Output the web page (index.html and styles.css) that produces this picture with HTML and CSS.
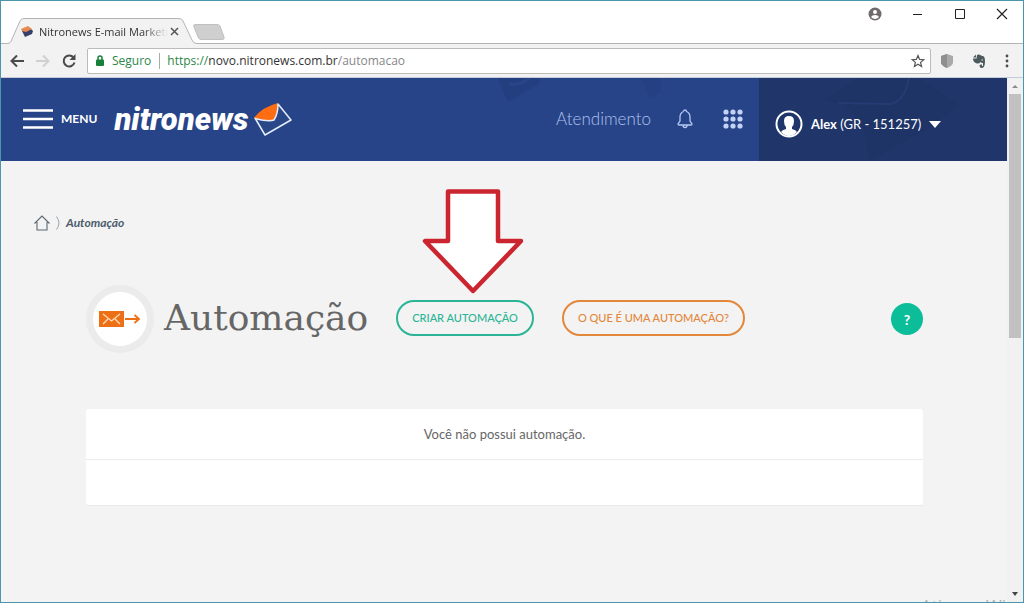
FILE: index.html
```html
<!DOCTYPE html>
<html lang="pt-BR">
  <head>
    <meta charset="UTF-8" />
    <meta name="viewport" content="width=device-width, initial-scale=1.0" />
    <title>Nitronews E-mail Marketing</title>
    <link rel="stylesheet" href="styles.css">
  </head>

  <body>
    <div class="window">
      <div class="titlebar">
        <div class="tab">
          <svg class="tab-shape" width="196" height="26" viewBox="0 0 196 26">
            <path d="M0 25.5H2C5 25.500 6 24 7 21L15 3Q16 .5 19 .5H174Q177 .5 178 3L187 22Q188 25.500 192 25.500V26H0Z" fill="#f2f2f2" />
            <path d="M0 25.500H2C5 25.500 6 24 7 21L15 3Q16 .5 19 .5H174Q177 .5 178 3L187 22Q188 25.500 192 25.500" fill="none" stroke="#b4b4b4" />
          </svg>
          <svg class="favicon" width="12" height="12" viewBox="0 0 12 12">
            <path d="M1 6L9 3L12 6L11 9L4 12Z" fill="#37416b" />
            <path d="M0 4L7 1L11 4L5 7L1 6Z" fill="#e78a4e" />
          </svg>
          <span class="tab-title">Nitronews E-mail Marketi</span>
          <button class="tab-close" aria-label="Fechar guia">
            <svg width="9" height="9" viewBox="0 0 9 9"><path d="M1 1L8 8M8 1L1 8" stroke="#555" stroke-width="1.500" /></svg>
          </button>
        </div>
        <button class="new-tab" aria-label="Nova guia">
          <svg width="32" height="16" viewBox="0 0 32 16"><path d="M2 .5H24Q26 .5 27 2L31 13Q32 15.500 29 15.500H8Q6 15.500 5 13L1 3Q0 .5 2 .5Z" fill="#cfcfcf" stroke="#c0c0c0" /></svg>
        </button>
        <div class="window-buttons">
          <button aria-label="Perfil">
            <svg width="14" height="14" viewBox="0 0 14 14"><circle cx="7" cy="7" r="6.500" fill="#706a6c" /><circle cx="7" cy="5" r="2" fill="#fff" /><path d="M3 10Q4 8 7 8T11 10Q9 12 7 12T3 10" fill="#fff" /></svg>
          </button>
          <button aria-label="Minimizar">
            <svg width="12" height="12" viewBox="0 0 12 12"><path d="M1 6.500H10" stroke="#222" /></svg>
          </button>
          <button aria-label="Maximizar">
            <svg width="12" height="12" viewBox="0 0 12 12"><path d="M1.500 1.500H10.500V10.500H1.500Z" fill="none" stroke="#222" /></svg>
          </button>
          <button aria-label="Fechar">
            <svg width="12" height="12" viewBox="0 0 12 12"><path d="M1 1L11 11M11 1L1 11" stroke="#222" stroke-width="1.200" /></svg>
          </button>
        </div>
      </div>

      <div class="toolbar">
        <button aria-label="Voltar">
          <svg width="16" height="16" viewBox="0 0 16 16"><path d="M15 8H3M8 2.500L2.500 8L8 13.500" fill="none" stroke="#4a4a4a" stroke-width="2" /></svg>
        </button>
        <button aria-label="Avançar">
          <svg width="16" height="16" viewBox="0 0 16 16"><path d="M1 8H13M8 2.500L13.500 8L8 13.500" fill="none" stroke="#d0d0d0" stroke-width="2" /></svg>
        </button>
        <button aria-label="Recarregar">
          <svg width="16" height="16" viewBox="0 0 16 16"><path d="M12.500 4.500A5.500 5.500 0 1 0 13.500 9.500" fill="none" stroke="#4a4a4a" stroke-width="2" /><path d="M14.500 1V7H8.500Z" fill="#4a4a4a" /></svg>
        </button>
        <div class="address">
          <svg width="8" height="12" viewBox="0 0 8 12"><path d="M2 5V3Q2 1 4 1T6 3V5" fill="none" stroke="#188038" stroke-width="1.500" /><rect y="4.500" width="8" height="6.500" rx="1" fill="#188038" /></svg>
          <span class="secure">Seguro</span>
          <span class="url"><span class="scheme">https://</span>novo.nitronews.com.br<span class="path">/automacao</span></span>
          <button class="star" aria-label="Favoritos">
            <svg width="14" height="14" viewBox="0 0 14 14"><path d="M7 1.500L8.600 5.400L12.800 5.700L9.600 8.400L10.600 12.500L7 10.300L3.400 12.500L4.400 8.400L1.200 5.700L5.400 5.400Z" fill="none" stroke="#555" stroke-width="1.200" /></svg>
          </button>
        </div>
        <div class="extensions">
          <button aria-label="Escudo">
            <svg width="12" height="14" viewBox="0 0 12 14"><path d="M6 0L12 2V9Q11 12 6 14Q1 12 0 9V2Z" fill="#a9a9a9" /><path d="M6 0V14Q1 12 0 9V2Z" fill="#8f8f8f" /></svg>
          </button>
          <button aria-label="Evernote">
            <svg width="12" height="14" viewBox="0 0 12 14"><path d="M4 1Q6 0 8 1.500L11 2.500Q12 4 12 7Q12 14 9 14Q6.500 14 6.500 11.500Q7 10 9 10.500V12H10V9Q8 9 7.500 8Q6 10 4 9.500Q0 8.500 0 4.500H3.500Z" fill="#4b5a5c" /><path d="M0 3.500L3 .5V3.500Z" fill="#4b5a5c" /><path d="M8.500 6H10" stroke="#f2f2f2" /></svg>
          </button>
          <button aria-label="Menu do navegador">
            <svg width="4" height="14" viewBox="0 0 4 14" fill="#4a4a4a"><circle cx="2" cy="2" r="1.400" /><circle cx="2" cy="7" r="1.400" /><circle cx="2" cy="12" r="1.400" /></svg>
          </button>
        </div>
      </div>

      <div class="viewport">
        <div class="page">
          <header class="header">
            <button class="menu">
              <svg width="30" height="20" viewBox="0 0 30 20"><path d="M0 1.500H30M0 10H30M0 18.500H30" stroke="#fff" stroke-width="2.400" /></svg>
              MENU
            </button>
            <a class="logo" href="#">
              nitronews
              <svg width="38" height="34" viewBox="0 0 38 34">
                <path d="M1 15L11 32L37 17L24 1Z" fill="#2a4888" stroke="#e4eefc" stroke-width="1.500" stroke-linejoin="round" />
                <path d="M0 15Q8 4 24 0Q24 11 20 17Q17 19 0 15Z" fill="#ff6d13" />
                <path d="M1 15.500Q15 19 20 17Q24 11 24 1" fill="none" stroke="#e4eefc" stroke-width="1.500" />
              </svg>
            </a>
            <svg class="header-art" width="180" height="60" viewBox="0 0 180 60" fill="#213c7b">
              <path d="M17 0L27 24L59 5L57 0Z" opacity=".6" />
              <path d="M28 6Q38 8 48 0" fill="none" stroke="#29468a" stroke-width="3" />
              <path d="M160 0L169 20L180 14V0Z" opacity=".35" />
            </svg>
            <nav class="nav">
              <a class="support" href="#">Atendimento</a>
              <button aria-label="Notificações">
                <svg width="16" height="20" viewBox="0 0 16 20"><path d="M6.500 2.500Q6.500 1 8 1T9.500 2.500Q13 4 13 8V12L15 15Q15 16 14 16H2Q1 16 1 15L3 12V8Q3 4 6.500 2.500M6 16.500Q6 18.500 8 18.500T10 16.500" fill="none" stroke="#b4c8f2" stroke-width="1.300" /></svg>
              </button>
              <button aria-label="Aplicativos">
                <svg width="20" height="20" viewBox="0 0 20 20" fill="#c3d3f6"><circle cx="3" cy="3" r="2.600" /><circle cx="10" cy="3" r="2.600" /><circle cx="17" cy="3" r="2.600" /><circle cx="3" cy="10" r="2.600" /><circle cx="10" cy="10" r="2.600" /><circle cx="17" cy="10" r="2.600" /><circle cx="3" cy="17" r="2.600" /><circle cx="10" cy="17" r="2.600" /><circle cx="17" cy="17" r="2.600" /></svg>
              </button>
            </nav>
            <button class="user">
              <svg class="user-art" width="160" height="83" viewBox="0 0 160 83">
                <path d="M15 22L50 0H110L150 27L115 53L60 83L55 50L35 25Z" fill="#1c3060" opacity=".4" />
                <path d="M30 25L80 26Q95 25 100 0" fill="none" stroke="#29417b" stroke-width="2" opacity=".6" />
              </svg>
              <svg width="28" height="28" viewBox="0 0 28 28"><circle cx="14" cy="14" r="12.500" fill="none" stroke="#fff" stroke-width="2" /><path d="M14 6Q19 6 19 11Q19 15 17 17V19Q21 20 22 22Q18 26 14 26T6 22Q7 20 11 19V17Q9 15 9 11Q9 6 14 6Z" fill="#fff" /></svg>
              <span><b>Alex</b> (GR - 151257)</span>
              <svg width="12" height="7" viewBox="0 0 12 7"><path d="M0 0H12L6 7Z" fill="#fff" /></svg>
            </button>
          </header>

          <main>
            <nav class="breadcrumb">
              <a href="#" aria-label="Início">
                <svg width="16" height="16" viewBox="0 0 16 16"><path d="M.5 8.500L8 1L15.500 8.500M3 7V15H13V7" fill="none" stroke="#5a6670" stroke-width="1.100" /></svg>
              </a>
              <svg width="4" height="14" viewBox="0 0 4 14"><path d="M.5 .5Q3 4 3 7T.5 13.500" fill="none" stroke="#9aa3aa" /></svg>
              <span>Automação</span>
            </nav>

            <div class="content">
              <div class="heading">
                <div class="badge">
                  <svg width="42" height="16" viewBox="0 0 42 16">
                    <rect width="25" height="16" fill="#ee7016" />
                    <path d="M4 3L12.500 10L21 3M4 13L9 8M21 13L16 8" fill="none" stroke="#ffdfb8" stroke-width="1.300" />
                    <path d="M26 8H40M35.500 4L40 8L35.500 12" fill="none" stroke="#ee7016" stroke-width="1.800" />
                  </svg>
                </div>
                <h1>Automação</h1>
                <button class="btn btn-create">CRIAR AUTOMAÇÃO</button>
                <button class="btn btn-what">O QUE É UMA AUTOMAÇÃO?</button>
                <button class="help">?</button>
              </div>

              <div class="card">
                <p>Você não possui automação.</p>
                <div class="card-footer"></div>
              </div>
            </div>
          </main>
        </div>

        <div class="scrollbar">
          <svg width="16" height="16" viewBox="0 0 16 16"><path d="M5 10L8 7L11 10Z" fill="#8c8c8c" /></svg>
          <div class="thumb"></div>
          <svg class="down" width="16" height="16" viewBox="0 0 16 16"><path d="M5 6H11L8 10Z" fill="#444" /></svg>
        </div>
      </div>

      <svg class="pointer" width="102" height="106" viewBox="0 0 102 106">
        <path d="M26 3.500H76V53H99L51 103L3 53H26Z" fill="#fff" stroke="#cb2530" stroke-width="4.500" stroke-linejoin="round" />
      </svg>
      <div class="watermark">Ativar o Wi</div>
    </div>
  </body>
</html>
```
FILE: styles.css
```css
* {
  box-sizing: border-box;
}

body {
  margin: 0;
  font-family: Lato, sans-serif;
}

button {
  display: flex;
  align-items: center;
  justify-content: center;
  padding: 0;
  border: none;
  background: none;
  font-family: inherit;
  cursor: pointer;
}

a {
  color: inherit;
  text-decoration: none;
}

svg {
  flex-shrink: 0;
}

.window {
  position: relative;
  display: flex;
  flex-direction: column;
  height: 100vh;
  border: 1px solid #4a97ab;
  overflow: hidden;
  background: #fff;
}

/* browser */
.titlebar {
  display: flex;
  align-items: flex-end;
  height: 43px;
  padding-left: 4px;
  border-bottom: 1px solid #b4b4b4;
}

.tab {
  position: relative;
  display: flex;
  align-items: center;
  width: 188px;
  height: 26px;
  padding: 0 10px 0 16px;
  margin-bottom: -1px;
}

.tab-shape {
  position: absolute;
  left: 0;
  top: 0;
}

.favicon,
.tab-title,
.tab-close {
  position: relative;
}

.tab-title {
  flex: 1;
  margin-left: 6px;
  font: 11px "Open Sans", sans-serif;
  white-space: nowrap;
  color: #333;
  mask-image: linear-gradient(to right, #000 80%, transparent);
}

.tab-close {
  margin: 0 4px 0 2px;
}

.new-tab {
  margin-bottom: 3px;
}

.window-buttons {
  display: flex;
  align-self: flex-start;
  gap: 30px;
  margin-left: auto;
  padding: 6px 15px 0 0;
}

.toolbar {
  display: flex;
  align-items: center;
  gap: 10px;
  height: 34px;
  padding: 0 14px 0 8px;
  background: #f2f2f2;
  border-bottom: 1px solid #c4ccdc;
}

.address {
  display: flex;
  flex: 1;
  align-items: center;
  height: 26px;
  padding: 0 5px 0 8px;
  background: #fff;
  border: 1px solid #bbb;
  border-radius: 2px;
  font: 12px "Open Sans", sans-serif;
}

.secure {
  padding: 0 8px;
  color: #2c8748;
  border-right: 1px solid #aaa;
  line-height: 16px;
}

.url {
  padding-left: 7px;
  color: #333;
}

.scheme {
  color: #2c8748;
}

.path {
  color: #888;
}

.star {
  margin-left: auto;
}

.extensions {
  display: flex;
  gap: 20px;
}

/* page */
.viewport {
  display: flex;
  flex: 1;
  min-height: 0;
}

.page {
  flex: 1;
  overflow: hidden;
  background: #f3f3f3;
}

.header {
  position: relative;
  display: flex;
  align-items: center;
  height: 83px;
  padding-left: 22px;
  background: #274488;
  color: #fff;
}

.menu {
  gap: 8px;
  padding-bottom: 2px;
  color: #fff;
  font-size: 12px;
  font-weight: bold;
}

.logo {
  display: flex;
  align-items: center;
  gap: 6px;
  margin-left: 17px;
  font: italic 900 31px Roboto, sans-serif;
}

.header-art {
  position: absolute;
  top: 0;
  right: 346px;
}

.nav {
  position: relative;
  display: flex;
  align-items: center;
  margin-left: auto;
  gap: 26px;
  padding: 0 16px 2px 0;
}

.support {
  color: #aec1ec;
  font-size: 17px;
  font-weight: 300;
}

.nav button + button {
  margin-left: 4px;
}

.user {
  position: relative;
  justify-content: flex-start;
  gap: 8px;
  width: 248px;
  height: 83px;
  padding: 9px 0 0 16px;
  background: #20366b;
  color: #fff;
  font-size: 13px;
}

.user-art {
  position: absolute;
  left: 50px;
  top: 0;
}

.user span,
.user-art ~ svg {
  position: relative;
}

.breadcrumb {
  display: flex;
  align-items: center;
  gap: 6px;
  padding: 53px 33px 0;
  color: #4c5c6c;
  font-size: 12px;
  font-style: italic;
  font-weight: bold;
  line-height: 18px;
}

.breadcrumb a {
  display: flex;
}

.content {
  padding: 53px 84px 0 85px;
}

.heading {
  display: flex;
  align-items: center;
}

.badge {
  display: flex;
  align-items: center;
  justify-content: center;
  width: 68px;
  height: 68px;
  border: 7px solid #ebebeb;
  border-radius: 50%;
  background: #fff;
}

h1 {
  margin: 0 28px 4px 10px;
  color: #666;
  font: 36px "DejaVu Serif", serif;
}

.btn {
  height: 36px;
  padding: 0 14px 2px;
  margin-bottom: 2px;
  border: 2px solid;
  border-radius: 18px;
  font-size: 11px;
  font-weight: 500;
}

.btn-create {
  margin-right: 28px;
  color: #2bb596;
}

.btn-what {
  color: #e3873a;
}

.help {
  width: 32px;
  height: 32px;
  margin-left: auto;
  border-radius: 50%;
  background: #0bbd98;
  color: #fff;
  font-size: 14px;
  font-weight: bold;
}

.card {
  margin-top: 56px;
  background: #fff;
  border-bottom: 1px solid #e8e8e8;
  border-radius: 3px;
}

.card p {
  margin: 0;
  border-bottom: 1px solid #ececec;
  color: #666;
  font-size: 13px;
  line-height: 50px;
  text-align: center;
}

.card-footer {
  height: 45px;
}

.scrollbar {
  display: flex;
  flex-direction: column;
  width: 16px;
  padding: 0 2px;
  background: #f1f1f1;
}

.scrollbar svg {
  align-self: center;
}

.thumb {
  height: 244px;
  background: #c1c1c1;
}

.down {
  margin-top: auto;
}

/* drawn over the page */
.pointer {
  position: absolute;
  left: 421px;
  top: 187px;
}

.watermark {
  position: absolute;
  right: 12px;
  bottom: 0;
  width: 90px;
  height: 5px;
  overflow: hidden;
  color: #b5b5b5;
  font: 17px/18px "Open Sans", sans-serif;
  white-space: nowrap;
}
```
